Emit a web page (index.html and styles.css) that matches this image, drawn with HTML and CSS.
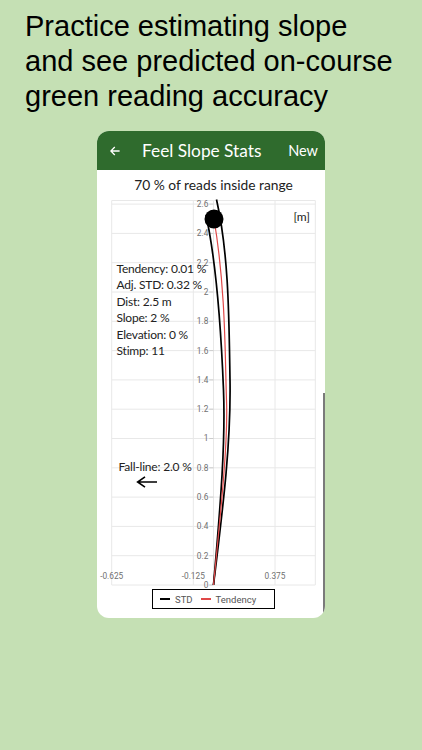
FILE: index.html
```html
<!DOCTYPE html>
<html>
<head>
<meta charset="utf-8">
<link rel="stylesheet" href="styles.css">
</head>
<body>
<h1 class="headline"><span>Practice estimating slope</span><span>and see predicted on-course</span><span>green reading accuracy</span></h1>
<div class="card">
  <div class="appbar">
    <svg class="back" viewBox="0 0 10 10" width="10" height="10"><path d="M9.6 5H0.8M4.8 1L0.8 5L4.8 9" fill="none" stroke="#fff" stroke-width="1.3"/></svg>
    <span class="title">Feel Slope Stats</span>
    <span class="action">New</span>
  </div>
  <div class="summary">70 % of reads inside range</div>
  <div class="chart">
    <svg class="plot" width="228" height="393" viewBox="97 196 228 393">
      <g stroke="#e8e8e8" stroke-width="1">
        <line x1="111.7" y1="585" x2="315.3" y2="585"/>
        <line x1="111.7" y1="555.7" x2="315.3" y2="555.7"/>
        <line x1="111.7" y1="526.4" x2="315.3" y2="526.4"/>
        <line x1="111.7" y1="497.1" x2="315.3" y2="497.1"/>
        <line x1="111.7" y1="467.8" x2="315.3" y2="467.8"/>
        <line x1="111.7" y1="438.5" x2="315.3" y2="438.5"/>
        <line x1="111.7" y1="409.2" x2="315.3" y2="409.2"/>
        <line x1="111.7" y1="379.9" x2="315.3" y2="379.9"/>
        <line x1="111.7" y1="350.6" x2="315.3" y2="350.6"/>
        <line x1="111.7" y1="321.3" x2="315.3" y2="321.3"/>
        <line x1="111.7" y1="292" x2="315.3" y2="292"/>
        <line x1="111.7" y1="262.7" x2="315.3" y2="262.7"/>
        <line x1="111.7" y1="233.4" x2="315.3" y2="233.4"/>
        <line x1="111.7" y1="204.1" x2="315.3" y2="204.1"/>
        <line x1="111.7" y1="200.5" x2="315.3" y2="200.5"/>
        <line x1="111.7" y1="200.5" x2="111.7" y2="585"/>
        <line x1="193.3" y1="200.5" x2="193.3" y2="585"/>
        <line x1="275" y1="200.5" x2="275" y2="585"/>
        <line x1="315.3" y1="200.5" x2="315.3" y2="585"/>
        <line x1="213.5" y1="200.5" x2="213.5" y2="585"/>
      </g>
      <g stroke="#c4c4c4" stroke-width="0.8">
        <line x1="209.3" y1="585" x2="213.5" y2="585"/>
        <line x1="209.3" y1="555.7" x2="213.5" y2="555.7"/>
        <line x1="209.3" y1="526.4" x2="213.5" y2="526.4"/>
        <line x1="209.3" y1="497.1" x2="213.5" y2="497.1"/>
        <line x1="209.3" y1="467.8" x2="213.5" y2="467.8"/>
        <line x1="209.3" y1="438.5" x2="213.5" y2="438.5"/>
        <line x1="209.3" y1="409.2" x2="213.5" y2="409.2"/>
        <line x1="209.3" y1="379.9" x2="213.5" y2="379.9"/>
        <line x1="209.3" y1="350.6" x2="213.5" y2="350.6"/>
        <line x1="209.3" y1="321.3" x2="213.5" y2="321.3"/>
        <line x1="209.3" y1="292" x2="213.5" y2="292"/>
        <line x1="209.3" y1="262.7" x2="213.5" y2="262.7"/>
        <line x1="209.3" y1="233.4" x2="213.5" y2="233.4"/>
        <line x1="209.3" y1="204.1" x2="213.5" y2="204.1"/>
      </g>
      <g class="ylab" text-anchor="end">
        <text x="208.3" y="587.9">0</text>
        <text x="208.3" y="558.6">0.2</text>
        <text x="208.3" y="529.3">0.4</text>
        <text x="208.3" y="500">0.6</text>
        <text x="208.3" y="470.7">0.8</text>
        <text x="208.3" y="441.4">1</text>
        <text x="208.3" y="412.1">1.2</text>
        <text x="208.3" y="382.8">1.4</text>
        <text x="208.3" y="353.5">1.6</text>
        <text x="208.3" y="324.2">1.8</text>
        <text x="208.3" y="294.9">2</text>
        <text x="208.3" y="265.6">2.2</text>
        <text x="208.3" y="236.3">2.4</text>
        <text x="208.3" y="207">2.6</text>
      </g>
      <g class="xlab" text-anchor="middle">
        <text x="111.7" y="578.8">-0.625</text>
        <text x="193.3" y="578.8">-0.125</text>
        <text x="275" y="578.8">0.375</text>
      </g>
      <path d="M213.5 585C221 500 225.5 440 223.5 390S218 270 206 215" fill="none" stroke="#000" stroke-width="1.7"/>
      <path d="M213.5 585C224 500 231 440 230 380S229 255 216.5 199.5" fill="none" stroke="#000" stroke-width="1.7"/>
      <path d="M213.5 585C222 500 228 440 226.5 400S226 290 214 219" fill="none" stroke="#e04848" stroke-width="1.2"/>
      <circle cx="214" cy="219" r="9.5" fill="#000"/>
      <path d="M157 482H138M145 476.8L137.6 482L145 487.2" fill="none" stroke="#000" stroke-width="1.6"/>
    </svg>
    <div class="stats">
      <div>Tendency: 0.01 %</div>
      <div>Adj. STD: 0.32 %</div>
      <div>Dist: 2.5 m</div>
      <div>Slope: 2 %</div>
      <div>Elevation: 0 %</div>
      <div>Stimp: 11</div>
    </div>
    <div class="unit">[m]</div>
    <div class="fall">Fall-line: 2.0 %</div>
  </div>
  <div class="legend">
    <span class="swatch"></span><span class="lbl">STD</span>
    <span class="swatch red"></span><span class="lbl">Tendency</span>
  </div>
  <div class="scrollbar"></div>
</div>
</body>
</html>
```

FILE: styles.css
```css
html, body {
  margin: 0;
  padding: 0;
}
body {
  background: #c5e0b4;
  width: 422px;
  height: 750px;
  overflow: hidden;
  font-family: Lato, "Noto Sans", sans-serif;
}
.headline {
  margin: 0;
  padding: 8.5px 0 0 25px;
  font: 400 29px/35px "Liberation Sans", Arial, sans-serif;
  color: #000;
}
.headline span {
  display: block;
  white-space: nowrap;
}
.card {
  position: relative;
  width: 228px;
  height: 487px;
  margin: 17.5px auto 0;
  background: #fff;
  border-radius: 12px;
  overflow: hidden;
}
.appbar {
  display: flex;
  align-items: center;
  height: 39px;
  padding: 0 7px 0 13px;
  background: #2f6b2d;
  color: #fff;
}
.back {
  flex: none;
  display: block;
}
.title {
  margin-left: 22px;
  font-size: 17.3px;
}
.action {
  margin-left: auto;
  font-size: 14.5px;
}
.summary {
  padding: 4px 0 0 5px;
  height: 22px;
  line-height: 22px;
  text-align: center;
  font-size: 13.8px;
  color: #222;
}
.chart {
  position: relative;
  height: 393px;
}
.plot {
  display: block;
}
.ylab, .xlab {
  font-family: Roboto, "Liberation Sans", sans-serif;
  font-size: 8.3px;
  fill: #707070;
}
.stats, .unit, .fall {
  position: absolute;
  font-size: 12px;
  line-height: 16.4px;
  letter-spacing: -0.2px;
  color: #222;
  white-space: nowrap;
}
.stats {
  left: 19.5px;
  top: 65px;
}
.unit {
  left: 196.5px;
  top: 13px;
  letter-spacing: 0;
}
.fall {
  left: 21.5px;
  top: 263px;
}
.legend {
  display: flex;
  align-items: center;
  box-sizing: border-box;
  width: 123px;
  height: 20px;
  margin-left: 55px;
  padding-left: 7px;
  border: 1.5px solid #000;
  font-family: Roboto, "Liberation Sans", sans-serif;
  font-size: 9.5px;
  color: #555;
}
.swatch {
  width: 10px;
  height: 2px;
  margin-right: 5px;
  background: #000;
}
.swatch.red {
  margin-left: 8px;
  background: #e04848;
}
.scrollbar {
  position: absolute;
  right: 0.5px;
  top: 262px;
  width: 2px;
  height: 220px;
  background: #7a7a7a;
}
```
